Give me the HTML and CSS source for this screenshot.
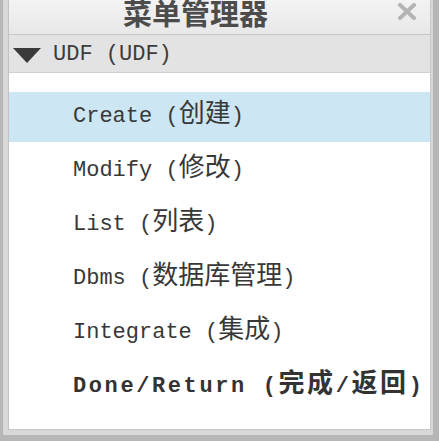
FILE: index.html
```html
<!DOCTYPE html>
<html>
<head>
<meta charset="utf-8">
<link rel="stylesheet" href="styles.css">
</head>
<body>
<div class="window">
  <div class="panel">
    <div class="titlebar">
      <span class="title">菜单管理器</span>
      <svg class="close" width="18" height="17" viewBox="0 0 18 17">
        <path d="M2 2 L16 15 M16 2 L2 15" stroke="#b4b4b4" stroke-width="4" stroke-linecap="square"/>
      </svg>
    </div>
    <div class="group">
      <svg class="tri" width="28" height="15" viewBox="0 0 28 15">
        <polygon points="0,0 28,0 14,15" fill="#3a3a3a"/>
      </svg>
      <span class="group-label">UDF (UDF)</span>
    </div>
    <div class="list">
      <div class="item selected">Create (<span class="zh">创建</span>)</div>
      <div class="item">Modify (<span class="zh">修改</span>)</div>
      <div class="item">List (<span class="zh">列表</span>)</div>
      <div class="item">Dbms (<span class="zh">数据库管理</span>)</div>
      <div class="item">Integrate (<span class="zh">集成</span>)</div>
      <div class="item bold">Done/Return (<span class="zh">完成</span>/<span class="zh">返回</span>)</div>
    </div>
  </div>
</div>
</body>
</html>
```

FILE: styles.css
```css
html, body {
  margin: 0;
  padding: 0;
  background: #d6d6d6;
}
.window {
  box-sizing: border-box;
  width: 439px;
  height: 441px;
  border-style: solid;
  border-color: #b6b6b6;
  border-width: 0 6px 6px 3px;
  padding: 0 2px 5px 5px;
  background: #d8d8d8;
  display: flex;
}
.panel {
  flex: 1;
  display: flex;
  flex-direction: column;
  border-left: 1px solid #c2c2c2;
  border-right: 1px solid #c8c8c8;
  border-bottom: 1px solid #c8c8c8;
  background: #fff;
}
.titlebar {
  height: 34px;
  flex: none;
  display: flex;
  align-items: flex-start;
  background: linear-gradient(#f3f3f3, #e8e8e8);
  border-bottom: 1px solid #c8c8c8;
  overflow: hidden;
}
.title {
  flex: 1;
  text-align: center;
  padding-right: 16px;
  margin-top: -3px;
  font-family: "Noto Sans CJK SC", sans-serif;
  font-weight: 700;
  font-size: 29px;
  line-height: 30px;
  color: #4c4c4c;
}
.close {
  margin: 3px 14px 0 0;
  flex: none;
}
.group {
  height: 37px;
  flex: none;
  display: flex;
  align-items: center;
  gap: 12px;
  padding-left: 4px;
  background: #e3e3e3;
  border-bottom: 1px solid #d2d2d2;
}
.tri {
  flex: none;
  margin-top: 3px;
}
.group-label {
  font-family: "Liberation Mono", monospace;
  font-size: 22px;
  color: #3c3c3c;
  margin-top: 2px;
}
.list {
  flex: 1;
  display: flex;
  flex-direction: column;
  gap: 4px;
  padding-top: 19px;
  background: #fff;
}
.item {
  height: 50px;
  line-height: 50px;
  padding-left: 64px;
  font-family: "Liberation Mono", "Noto Sans CJK SC", monospace;
  font-size: 22px;
  color: #383838;
  white-space: nowrap;
}
.item.selected {
  background: #cde6f3;
}
.zh {
  font-family: "Noto Sans CJK SC", sans-serif;
  font-size: 26px;
  line-height: 1;
}
.item.bold {
  font-weight: 700;
  letter-spacing: 2.6px;
  color: #333;
}
```
